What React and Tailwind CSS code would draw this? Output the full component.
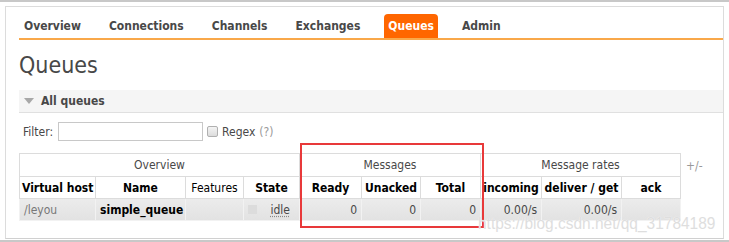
import React from "react";

const F = { fontFamily: '"DejaVu Sans Condensed", "DejaVu Sans", sans-serif' };

function Tab({ children, active }) {
  return (
    <div
      className={
        "h-[24px] px-[4px] flex items-center text-[12px] font-bold rounded-t-[4px] " +
        (active ? "bg-[#ff6600] text-white" : "text-[#484848]")
      }
    >
      {children}
    </div>
  );
}

export default function App() {
  const th = "border border-[#dcdcdc] font-bold text-[12px] text-black h-[22px] px-[2px] text-center whitespace-nowrap";
  const td = "border border-[#f2f2f2] h-[22px] px-[4px] text-[12px] whitespace-nowrap";
  return (
    <div className="w-[729px] h-[242px] bg-white relative overflow-hidden" style={F}>
      <div className="h-[2px] bg-[#c8c8c8]" />
      <div className="mx-[5px] mt-[4px] h-[233px] border border-[#dcdcdc] border-b-[#d0d0d0] bg-white">
        {/* nav */}
        <div className="pl-[13px] pt-[7px]">
          <div className="flex gap-[20px] pl-[1px] border-b-2 border-[#f9a84a]">
            <Tab>Overview</Tab>
            <Tab>Connections</Tab>
            <Tab>Channels</Tab>
            <Tab>Exchanges</Tab>
            <Tab active>Queues</Tab>
            <Tab>Admin</Tab>
          </div>
          <div className="text-[23px] text-[#484848] mt-[10px] leading-[30px]">Queues</div>
          <div className="mt-[10px] h-[23px] bg-[#f5f5f5] border-b border-[#e0e0e0] flex items-center">
            <svg width="10" height="6" viewBox="0 0 10 6" className="ml-[5px] mr-[7px]">
              <path d="M0 0 L10 0 L5 6 Z" fill="#a8a8a8" />
            </svg>
            <span className="text-[12px] font-bold text-[#484848]">All queues</span>
          </div>
          <div className="flex items-center mt-[9px] h-[19px] text-[12px] text-[#484848]">
            <span className="ml-[4px]">Filter:</span>
            <div className="ml-[5px] w-[145px] h-[19px] border border-[#c8c8c8] bg-white" />
            <div className="ml-[4px] w-[11px] h-[11px] border border-[#b0b0b0] rounded-[2px] bg-gradient-to-b from-[#f4f4f4] to-[#dcdcdc]" />
            <span className="ml-[4px]">Regex</span>
            <span className="ml-[4px] text-[#999]">(?)</span>
          </div>
          <div className="flex items-start mt-[12px]">
            <table className="border-collapse w-[661px]" style={{ tableLayout: "fixed" }}>
              <colgroup>
                <col style={{ width: 76 }} />
                <col style={{ width: 90 }} />
                <col style={{ width: 58 }} />
                <col style={{ width: 56 }} />
                <col style={{ width: 62 }} />
                <col style={{ width: 59 }} />
                <col style={{ width: 60 }} />
                <col style={{ width: 61 }} />
                <col style={{ width: 80 }} />
                <col style={{ width: 59 }} />
              </colgroup>
              <thead>
                <tr>
                  <th colSpan={4} className="border border-[#dcdcdc] font-normal text-[12px] text-[#484848] h-[23px]">Overview</th>
                  <th colSpan={3} className="border border-[#dcdcdc] font-normal text-[12px] text-[#484848] h-[23px]">Messages</th>
                  <th colSpan={3} className="border border-[#dcdcdc] font-normal text-[12px] text-[#484848] h-[23px]">Message rates</th>
                </tr>
                <tr>
                  <th className={th + " text-left"}>Virtual host</th>
                  <th className={th}>Name</th>
                  <th className={th + " font-normal text-[#484848]"}>Features</th>
                  <th className={th}>State</th>
                  <th className={th}>Ready</th>
                  <th className={th}>Unacked</th>
                  <th className={th}>Total</th>
                  <th className={th + " px-0"}>incoming</th>
                  <th className={th}>deliver / get</th>
                  <th className={th}>ack</th>
                </tr>
              </thead>
              <tbody>
                <tr className="bg-gradient-to-b from-[#ececec] to-[#e2e2e2] border-b border-[#d4d4d4]">
                  <td className={td + " text-[#777]"}>/leyou</td>
                  <td className={td + " font-bold text-black text-center"}>simple_queue</td>
                  <td className={td}></td>
                  <td className={td}>
                    <div className="flex items-center justify-between">
                      <div className="w-[9px] h-[9px] bg-[#dcdcdc]" />
                      <span className="text-[#484848] underline decoration-dotted decoration-[#888] underline-offset-2 mr-[5px]">idle</span>
                    </div>
                  </td>
                  <td className={td + " text-right text-[#484848]"}>0</td>
                  <td className={td + " text-right text-[#484848]"}>0</td>
                  <td className={td + " text-right text-[#484848]"}>0</td>
                  <td className={td + " text-right text-[#484848]"}>0.00/s</td>
                  <td className={td + " text-right text-[#484848]"}>0.00/s</td>
                  <td className={td}></td>
                </tr>
              </tbody>
            </table>
            <span className="ml-[5px] mt-[4px] text-[12px] text-[#999]">+/-</span>
          </div>
        </div>
      </div>
      <div className="h-[2px] bg-[#c8c8c8] mt-[1px]" />
      <div className="absolute left-[300px] top-[143px] w-[184px] h-[85px] border-2 border-[#e8393a]" />
      <div
        className="absolute left-[478px] top-[211px] text-[17px] text-[#dedede] whitespace-nowrap origin-left scale-x-[0.91]"
        style={{ fontFamily: '"Liberation Sans", sans-serif', textShadow: "0 0 1px #ffffff" }}
      >
        https://blog.csdn.net/qq_31784189
      </div>
    </div>
  );
}
